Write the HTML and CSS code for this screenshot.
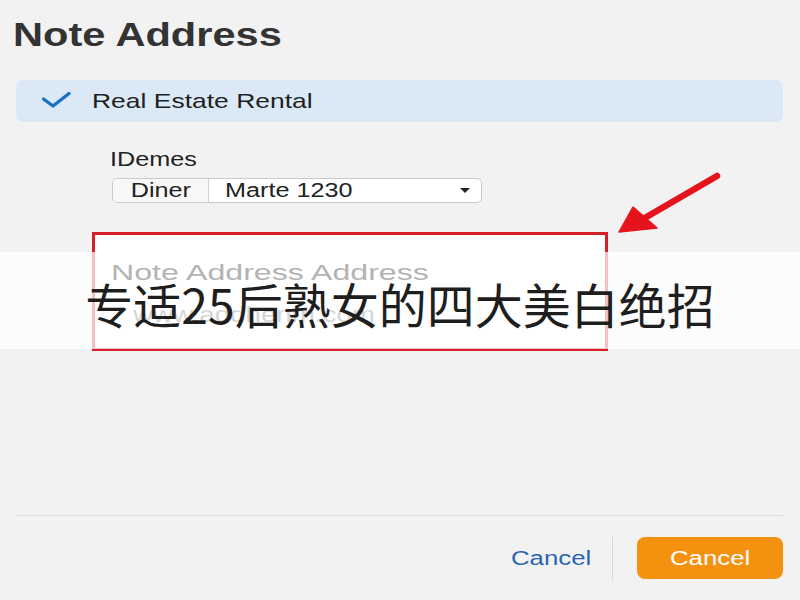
FILE: index.html
```html
<!DOCTYPE html>
<html lang="zh">
<head>
<meta charset="utf-8">
<title>Note Address</title>
<link rel="stylesheet" href="styles.css">
</head>
<body>
<div class="page">
  <h1 class="title"><span class="wide">Note Address</span></h1>

  <div class="selected-row">
    <svg class="check" width="30" height="18" viewBox="0 0 30 18">
      <polyline points="1.5,7 11,14 27,1.5" fill="none" stroke="#1b72c4" stroke-width="3.4" stroke-linecap="round" stroke-linejoin="round"/>
    </svg>
    <span class="row-text wide">Real Estate Rental</span>
  </div>

  <div class="field">
    <div class="label"><span class="wide">IDemes</span></div>
    <div class="select">
      <span class="seg"><span class="wide mid">Diner</span></span>
      <span class="val wide">Marte 1230</span>
      <span class="caret"></span>
    </div>
  </div>

  <div class="notebox">
    <div class="ph"><span class="wide ph-wide">Note Address Address</span></div>
    <div class="ph2"><span class="wide">www.addhenm.com</span></div>
  </div>

  <div class="spacer"></div>
  <div class="divider"></div>

  <div class="footer">
    <a class="link"><span class="wide right">Cancel</span></a>
    <span class="vsep"></span>
    <button class="primary"><span class="wide mid">Cancel</span></button>
  </div>

  <div class="band"></div>
  <div class="band-text">专适25后熟女的四大美白绝招</div>

  <svg class="arrow" width="800" height="600" viewBox="0 0 800 600">
    <line x1="717" y1="176" x2="643" y2="219" stroke="#e5141c" stroke-width="6.5" stroke-linecap="round"/>
    <polygon points="619,232 633,207 657,228" fill="#e5141c" stroke="#e5141c" stroke-width="1.5" stroke-linejoin="round"/>
  </svg>
</div>
</body>
</html>
```

FILE: styles.css
```css
html, body {
  margin: 0;
  padding: 0;
  background: #f2f2f2;
}

.page {
  position: relative;
  width: 800px;
  height: 600px;
  box-sizing: border-box;
  padding: 15px 17px 21px 16px;
  display: flex;
  flex-direction: column;
  font-family: "Liberation Sans", Arial, sans-serif;
  color: #1f1f1f;
  overflow: hidden;
}

/* the reference's latin text is drawn horizontally widened */
.wide {
  display: inline-block;
  transform: scaleX(1.26);
  transform-origin: left center;
  white-space: nowrap;
}

.wide.mid {
  transform-origin: center center;
}

.wide.right {
  transform-origin: right center;
}

.title {
  margin: 0 0 25px -3px;
  font-family: "Liberation Sans", Arial, sans-serif;
  font-weight: bold;
  font-size: 33px;
  line-height: 40px;
  color: #333333;
}

.selected-row {
  height: 42px;
  border-radius: 7px;
  background: #dbe9f6;
  display: flex;
  align-items: center;
  padding-left: 26px;
}

.check {
  display: block;
  margin-right: 20px;
}

.row-text {
  font-size: 21px;
  color: #1f1f1f;
}

.field {
  margin-top: 25px;
  padding-left: 96px;
}

.label {
  margin-left: -2px;
  font-size: 20px;
  line-height: 24px;
  color: #222222;
}

.select {
  margin-top: 7px;
  width: 370px;
  height: 25px;
  box-sizing: border-box;
  border: 1px solid #c9c9c9;
  border-radius: 5px;
  background: #ffffff;
  display: flex;
  align-items: center;
  overflow: hidden;
}

.seg {
  width: 96px;
  height: 100%;
  box-sizing: border-box;
  border-right: 1px solid #d2d2d2;
  background: #f8f8f8;
  display: flex;
  align-items: center;
  justify-content: center;
  font-size: 20px;
  color: #222222;
}

.val {
  margin-left: 16px;
  font-size: 20px;
  color: #222222;
}

.caret {
  margin-left: auto;
  margin-right: 11px;
  width: 0;
  height: 0;
  border-left: 5px solid transparent;
  border-right: 5px solid transparent;
  border-top: 5px solid #222222;
}

.notebox {
  margin-top: 29px;
  margin-left: 76px;
  width: 516px;
  height: 119px;
  box-sizing: border-box;
  border: 3px solid #d42129;
  background: #ffffff;
  padding: 25px 0 0 16px;
}

.ph {
  position: relative;
  z-index: 2;
  font-size: 22px;
  line-height: 26px;
  color: #b3b3b3;
}

.wide.ph-wide {
  transform: scaleX(1.46);
}

.ph2 {
  position: relative;
  z-index: 2;
  margin-top: 16px;
  padding-left: 22px;
  font-size: 22px;
  line-height: 26px;
  color: #d6d6d6;
}

.spacer {
  flex: 1;
}

.divider {
  height: 1px;
  background: #dcdcdc;
}

.footer {
  margin-top: 21px;
  height: 42px;
  display: flex;
  justify-content: flex-end;
  align-items: center;
}

.link {
  font-size: 20px;
  color: #2866b0;
  margin-right: 21px;
}

.link .wide,
.primary .wide {
  transform: scaleX(1.29);
}

.vsep {
  width: 1px;
  height: 43px;
  background: #d9d9d9;
  margin-right: 24px;
}

.primary {
  width: 146px;
  height: 42px;
  border: none;
  border-radius: 8px;
  background: #f49210;
  color: #ffffff;
  font-family: "Liberation Sans", Arial, sans-serif;
  font-size: 20px;
  padding: 0;
}

.band {
  position: absolute;
  left: 0;
  top: 252px;
  width: 800px;
  height: 97px;
  background: rgba(255, 255, 255, 0.72);
  z-index: 1;
}

.band-text {
  position: absolute;
  left: 0;
  top: 252px;
  width: 800px;
  height: 97px;
  box-sizing: border-box;
  padding-top: 4px;
  display: flex;
  align-items: center;
  justify-content: center;
  font-family: "Noto Sans CJK SC", "Noto Sans", sans-serif;
  font-size: 48px;
  color: #1e1e1e;
  z-index: 3;
}

.arrow {
  position: absolute;
  left: 0;
  top: 0;
  pointer-events: none;
  z-index: 4;
}
```
